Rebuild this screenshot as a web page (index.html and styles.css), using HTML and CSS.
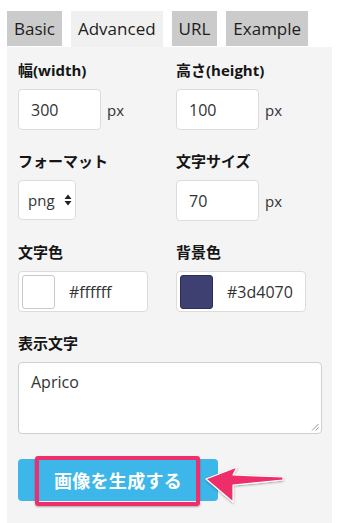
FILE: index.html
```html
<!DOCTYPE html>
<html lang="ja">
<head>
<meta charset="utf-8">
<link rel="stylesheet" href="styles.css">
</head>
<body>
<div class="wrap">
  <div class="tabs">
    <div class="tab">Basic</div>
    <div class="tab active">Advanced</div>
    <div class="tab">URL</div>
    <div class="tab">Example</div>
  </div>
  <div class="panel">
    <div class="grid">
      <div class="field">
        <div class="label">幅(width)</div>
        <div class="row"><div class="input num">300</div><span class="unit">px</span></div>
      </div>
      <div class="field">
        <div class="label">高さ(height)</div>
        <div class="row"><div class="input num">100</div><span class="unit">px</span></div>
      </div>
      <div class="field">
        <div class="label">フォーマット</div>
        <div class="row"><div class="input select">png<svg class="updown" width="8" height="12" viewBox="0 0 8 12"><path d="M4 0.5 L7.5 5 H0.5 Z M4 11.5 L7.5 7 H0.5 Z" fill="#222"/></svg></div></div>
      </div>
      <div class="field">
        <div class="label">文字サイズ</div>
        <div class="row"><div class="input num">70</div><span class="unit">px</span></div>
      </div>
      <div class="field">
        <div class="label">文字色</div>
        <div class="input color"><span class="swatch white"></span><span class="hex">#ffffff</span></div>
      </div>
      <div class="field">
        <div class="label">背景色</div>
        <div class="input color"><span class="swatch navy"></span><span class="hex">#3d4070</span></div>
      </div>
    </div>
    <div class="field wide">
      <div class="label">表示文字</div>
      <div class="textarea">Aprico<svg class="grip" width="8" height="8" viewBox="0 0 8 8"><path d="M7.5 1 L1 7.5 M7.5 4.5 L4.5 7.5" stroke="#999" stroke-width="1"/></svg></div>
    </div>
    <div class="btnwrap">
      <div class="button">画像を生成する</div>
      <div class="mark"></div>
      <svg class="arrow" width="90" height="50" viewBox="0 0 90 50">
        <defs><filter id="sh" x="-10%" y="-20%" width="130%" height="160%"><feDropShadow dx="0" dy="1" stdDeviation="1" flood-color="#000" flood-opacity="0.35"/></filter></defs>
        <path d="M4 22 L35 10 L31 18 L81 20 L81 23 L31 28 L31 45 Z" fill="#ee2f6b" stroke="#fff" stroke-width="1.2" stroke-linejoin="round" filter="url(#sh)"/>
      </svg>
    </div>
  </div>
</div>
</body>
</html>
```
FILE: styles.css
```css
* { box-sizing: border-box; }
html, body { margin: 0; padding: 0; background: #fff; }
body {
  font-family: "Open Sans", "Noto Sans CJK JP", sans-serif;
  color: #222;
}
.wrap { padding: 11px 8px 0 7px; }
.tabs { display: flex; gap: 9px; height: 36px; }
.tab {
  background: #cbcbcb;
  height: 35px;
  padding: 0 7px;
  font-size: 17px;
  line-height: 35px;
  color: #1d1d1d;
}
.tab.active { background: #f0f0f0; height: 36px; }
.panel {
  background: #f4f4f4;
  width: 325px;
  height: 476px;
  padding: 13px 11px 0 11px;
}
.grid {
  display: grid;
  grid-template-columns: 158px 146px;
  row-gap: 21px;
}
.label {
  font-family: "Open Sans", "Noto Sans CJK JP", sans-serif;
  font-weight: 700;
  font-size: 15px;
  line-height: 20px;
  height: 20px;
  margin-bottom: 9px;
  color: #151515;
}
.row { display: flex; align-items: center; }
.input {
  background: #fff;
  border: 1px solid #dcdcdc;
  border-radius: 4px;
  height: 41px;
  font-size: 16px;
  color: #333;
  display: flex;
  align-items: center;
}
.num { width: 83px; padding-left: 12px; }
.unit { margin-left: 6px; font-size: 15px; color: #333; }
.select { width: 58px; padding-left: 9px; gap: 9px; height: 40px; font-size: 15px; }
.updown { display: block; }
.color { width: 130px; padding: 3px; }
.swatch {
  width: 33px;
  height: 34px;
  border-radius: 3px;
  border: 1px solid #c8c8c8;
}
.swatch.white { background: #fff; }
.swatch.navy { background: #3d4070; border-color: #2c2f55; }
.hex { margin-left: 14px; font-size: 16px; color: #333; }
.wide { margin-top: 21px; }
.textarea {
  position: relative;
  width: 304px;
  height: 72px;
  background: #fff;
  border: 1px solid #cfcfcf;
  border-radius: 4px;
  padding: 8px 12px;
  font-size: 16px;
  color: #333;
}
.grip { position: absolute; right: 2px; bottom: 2px; }
.btnwrap { position: relative; margin-top: 25px; }
.button {
  width: 200px;
  height: 42px;
  background: #3db6ea;
  border-radius: 4px;
  color: #fff;
  font-family: "Noto Sans CJK JP", sans-serif;
  font-weight: 700;
  font-size: 18px;
  line-height: 42px;
  text-align: center;
  letter-spacing: 0.3px;
}
.mark {
  position: absolute;
  left: 17px;
  top: -3px;
  width: 165px;
  height: 50px;
  border: 4px solid #ee2f6b;
  border-radius: 3px;
  box-shadow: 0 1px 2px rgba(0,0,0,0.3);
}
.arrow { position: absolute; left: 184px; top: -2px; }
```
